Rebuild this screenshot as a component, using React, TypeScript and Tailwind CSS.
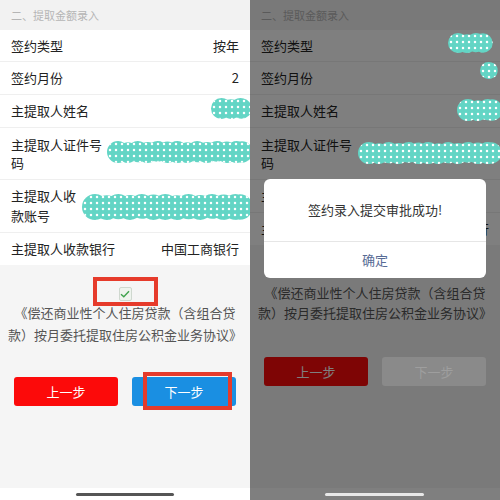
import React, { useId } from "react";

type BlobProps = { w: number; h: number; className: string };

// Scalloped teal marker stroke with a white polka-dot fill
function Blob({ w, h, className }: BlobProps) {
  const id = useId().replace(/:/g, "");
  const r = h / 2;
  const step = Math.max(4, h * 0.45);
  const circles: { cx: number; cy: number; rr: number }[] = [];
  let i = 0;
  for (let x = r; x <= w - r + 0.1; x += step) {
    const jitter = [0, 1, -0.6, 0.8, -1, 0.4][i % 6];
    circles.push({ cx: x, cy: r + jitter * 0.6, rr: r - Math.abs(jitter) * 0.6 });
    i++;
  }
  if (circles.length === 0) circles.push({ cx: w / 2, cy: r, rr: r });
  circles.push({ cx: w - r, cy: r, rr: r - 0.3 });
  return (
    <svg
      className={`absolute pointer-events-none ${className}`}
      width={w}
      height={h}
      viewBox={`0 0 ${w} ${h}`}
    >
      <defs>
        <clipPath id={`c${id}`}>
          {circles.map((c, k) => (
            <circle key={k} cx={c.cx} cy={c.cy} r={c.rr} />
          ))}
        </clipPath>
        <pattern id={`p${id}`} width="6" height="6" patternUnits="userSpaceOnUse">
          <circle cx="3" cy="3" r="1.25" fill="#ffffff" />
        </pattern>
      </defs>
      <g clipPath={`url(#c${id})`}>
        <rect width={w} height={h} fill="#63d5c5" />
        <rect width={w} height={h} fill={`url(#p${id})`} />
      </g>
    </svg>
  );
}

function Row({
  label,
  value,
  h,
  labelClass = "",
}: {
  label: string;
  value?: string;
  h: string;
  labelClass?: string;
}) {
  return (
    <div className={`${h} flex items-center justify-between border-b border-[#efefef] pl-[11px] pr-[11px]`}>
      <div className={labelClass}>{label}</div>
      {value ? <div>{value}</div> : null}
    </div>
  );
}

function Screen({ dim }: { dim?: boolean }) {
  return (
    <div className="relative flex h-[500px] w-[250px] shrink-0 flex-col overflow-hidden bg-[#f5f5f5] font-['Noto_Sans_CJK_SC','Noto_Sans',sans-serif] text-[13px] text-[#222]">
      <div className="flex h-[30px] items-center bg-[#f2f2f2] px-[11px] text-[11px] text-[#b5b5b5]">
        二、提取金额录入
      </div>

      <div className="bg-white">
        <Row label="签约类型" value={dim ? undefined : "按年"} h="h-[32px]" />
        <Row label="签约月份" value={dim ? undefined : "2"} h="h-[33px]" />
        <Row label="主提取人姓名" h="h-[33px]" />
        <Row label="主提取人证件号码" h="h-[52px]" labelClass="w-[92px] leading-[18px]" />
        {dim ? (
          <Row label="主提取人收款账号" h="h-[33px]" />
        ) : (
          <Row label="主提取人收款账号" h="h-[53px]" labelClass="w-[66px] leading-[20px]" />
        )}
        <div className="flex h-[32px] items-center justify-between px-[11px]">
          <div>主提取人收款银行</div>
          <div>中国工商银行</div>
        </div>
      </div>

      {dim ? (
        <div className="h-[38px]" />
      ) : (
        <div className="flex justify-center pt-[22px]">
          <div className="relative">
            <div className="flex h-[14px] w-[13px] items-center justify-center rounded-[2px] border border-[#cfd8cf] bg-[#eef4ee]">
              <svg width="10" height="8" viewBox="0 0 10 8">
                <path d="M1 4.2 L3.8 6.8 L9 1.2" fill="none" stroke="#3fa34d" strokeWidth="1.4" />
              </svg>
            </div>
            <div className="absolute left-[-26px] top-[-10px] h-[29px] w-[65px] border-[4px] border-[#e63b2b]" />
          </div>
        </div>
      )}

      <div
        className={`px-[8px] text-center text-[13px] text-[#555] ${
          dim ? "leading-[20px]" : "mt-[1px] leading-[22px]"
        }`}
      >
        《偿还商业性个人住房贷款（含组合贷款）按月委托提取住房公积金业务协议》
      </div>

      <div className={`flex gap-[14px] px-[14px] ${dim ? "mt-[34px]" : "mt-[31px]"}`}>
        <div className="flex h-[29px] w-[104px] items-center justify-center rounded-[3px] bg-[#fc0a0a] text-white">
          上一步
        </div>
        {dim ? (
          <div className="relative z-10 flex h-[29px] w-[104px] items-center justify-center rounded-[3px] bg-[#8a8a8a] text-[#9e9e9e]">
            下一步
          </div>
        ) : (
          <div className="relative flex h-[29px] w-[104px] items-center justify-center rounded-[3px] bg-[#1a8fe2] text-white">
            下一步
            <div className="absolute bottom-[-4px] left-[11px] right-[4px] top-[-5px] border-[4px] border-[#e63b2b]" />
          </div>
        )}
      </div>

      <div className="flex-1" />
      <div className="h-[12px] bg-white" />

      {dim ? (
        <>
          <div className="absolute inset-0 bg-black/50" />
          <div className="absolute left-[14px] top-[179px] flex h-[99px] w-[222px] flex-col overflow-hidden rounded-[6px] bg-white">
            <div className="flex h-[62px] items-center justify-center text-[13px] text-[#333]">
              签约录入提交审批成功!
            </div>
            <div className="flex flex-1 items-center justify-center border-t border-[#e6e6e6] text-[13px] text-[#576b95]">
              确定
            </div>
          </div>
          <Blob w={45} h={20} className="left-[198px] top-[33px]" />
          <Blob w={18} h={17} className="left-[230px] top-[62px]" />
          <Blob w={46} h={22} className="left-[207px] top-[99px]" />
          <Blob w={144} h={22} className="left-[108px] top-[142px]" />
          <div className="absolute bottom-[4px] left-[75px] h-[3px] w-[99px] rounded-full bg-[#e8e8e8]" />
        </>
      ) : (
        <>
          <Blob w={41} h={21} className="left-[211px] top-[98px]" />
          <Blob w={146} h={22} className="left-[107px] top-[141px]" />
          <Blob w={171} h={26} className="left-[82px] top-[194px]" />
          <div className="absolute bottom-[4px] left-[76px] h-[3px] w-[98px] rounded-full bg-[#555]" />
        </>
      )}
    </div>
  );
}

export default function App() {
  return (
    <div className="flex h-[500px] w-[500px] overflow-hidden">
      <Screen />
      <Screen dim />
    </div>
  );
}
